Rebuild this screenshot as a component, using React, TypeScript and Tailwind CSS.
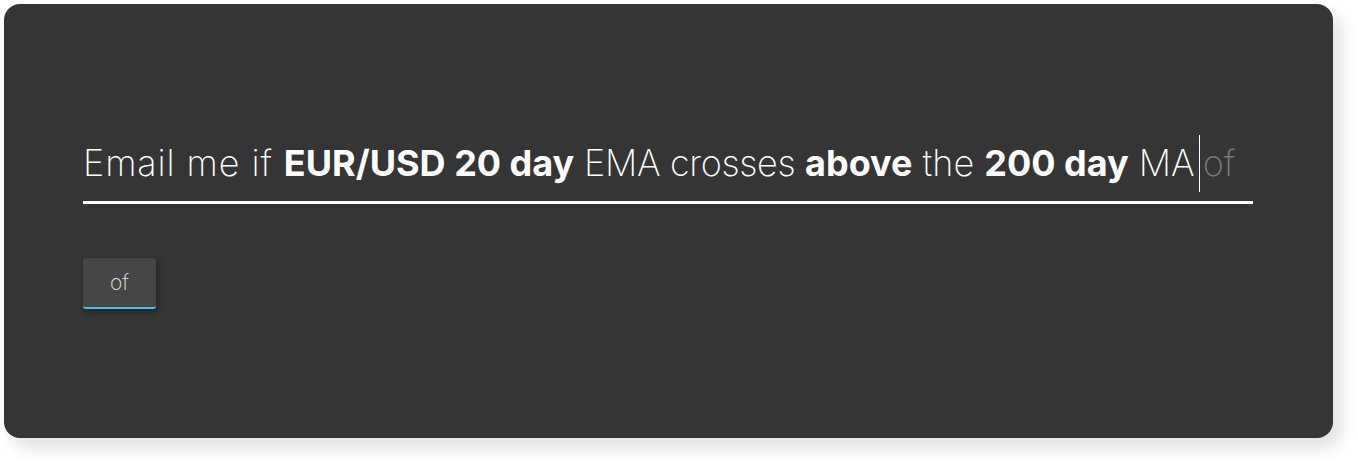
export default function App() {
  const light = "font-extralight";
  const bold = "font-bold";
  return (
    <div className="bg-white w-[1358px] h-[464px] p-1" style={{ fontFamily: "Inter, 'Noto Sans', sans-serif" }}>
      <div className="w-[1329px] h-[434px] rounded-[16px] bg-[#353535] shadow-[8px_10px_18px_rgba(0,0,0,0.12)] pl-[79px] pt-[131px]">
        <div className="w-[1170px] border-b-[3px] border-white pb-[9px]">
          <div className="flex items-center h-[57px] text-[36px] leading-[57px] text-white whitespace-pre">
            <span className={`${light} tracking-[0.9px]`}>Email me if </span>
            <span className={bold}>EUR/USD 20 day</span>
            <span className={`${light} tracking-[-0.35px]`}> EMA crosses </span>
            <span className={bold}>above</span>
            <span className={light}> the </span>
            <span className={bold}>200 day</span>
            <span className={light}> MA</span>
            <span className="inline-block w-px h-[57px] bg-white ml-[4px] mr-[3px]"></span>
            <span className={`${light} text-[#7a7a7a]`}>of</span>
          </div>
        </div>
        <div className="mt-[54px] w-[73px] h-[51px] rounded-[3px] bg-[#464646] border-b-2 border-[#3cc8ea] shadow-[2px_3px_6px_rgba(0,0,0,0.35)] flex items-center justify-center text-[21px] font-extralight text-[#e5e5e5]">
          of
        </div>
      </div>
    </div>
  );
}
